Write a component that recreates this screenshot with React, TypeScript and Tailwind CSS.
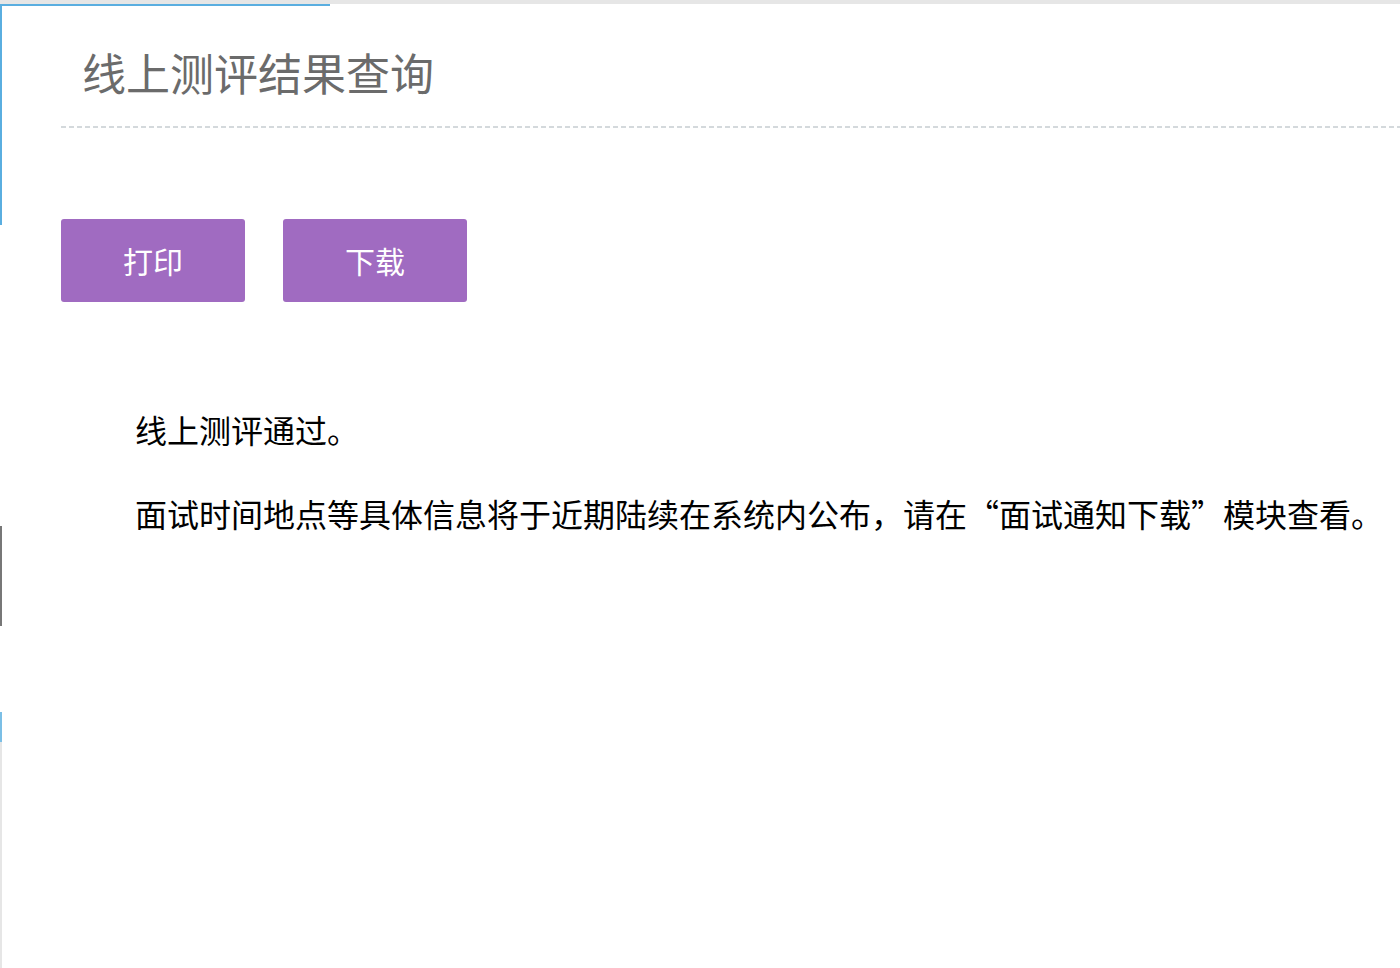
import React from 'react';

function LeftStrip() {
  return (
    <div className="flex w-[2px] shrink-0 flex-col">
      <div className="h-[219px] bg-[#5aaee0]" />
      <div className="h-[301px]" />
      <div className="h-[100px] bg-[#777777]" />
      <div className="h-[86px]" />
      <div className="h-[30px] bg-[#7bbfe6]" />
      <div className="flex-1 bg-[#e6e6e6]" />
    </div>
  );
}

export default function App() {
  const font = { fontFamily: '"Noto Sans CJK SC", "Noto Sans", sans-serif' };

  return (
    <div className="flex min-h-[968px] flex-col bg-white" style={font}>
      <div className="h-[4px] w-full bg-[#e6e6e6]" />
      <div className="h-[2px] w-[330px] bg-[#5aaee0]" />
      <div className="flex flex-1">
        <LeftStrip />
        <div className="ml-[59px] flex-1">
          <div className="pt-[36px] pb-[24px] pl-[21px]">
            <h1 className="text-[44px] leading-[60px] text-[#6b6b6b]">线上测评结果查询</h1>
          </div>
          <div className="h-[2px] bg-[repeating-linear-gradient(90deg,#d4d9dc_0_5px,transparent_5px_8px)]" />

          <div className="mt-[91px] flex gap-[38px]">
            <button className="h-[83px] w-[184px] rounded-[3px] bg-[#a06bc1] text-[30px] text-white">打印</button>
            <button className="h-[83px] w-[184px] rounded-[3px] bg-[#a06bc1] text-[30px] text-white">下载</button>
          </div>

          <div className="mt-[103px] flex flex-col gap-[36px] pl-[74px] text-[32px] leading-[48px] text-black">
            <p>线上测评通过。</p>
            <p>面试时间地点等具体信息将于近期陆续在系统内公布，请在“面试通知下载”模块查看。</p>
          </div>
        </div>
      </div>
    </div>
  );
}
